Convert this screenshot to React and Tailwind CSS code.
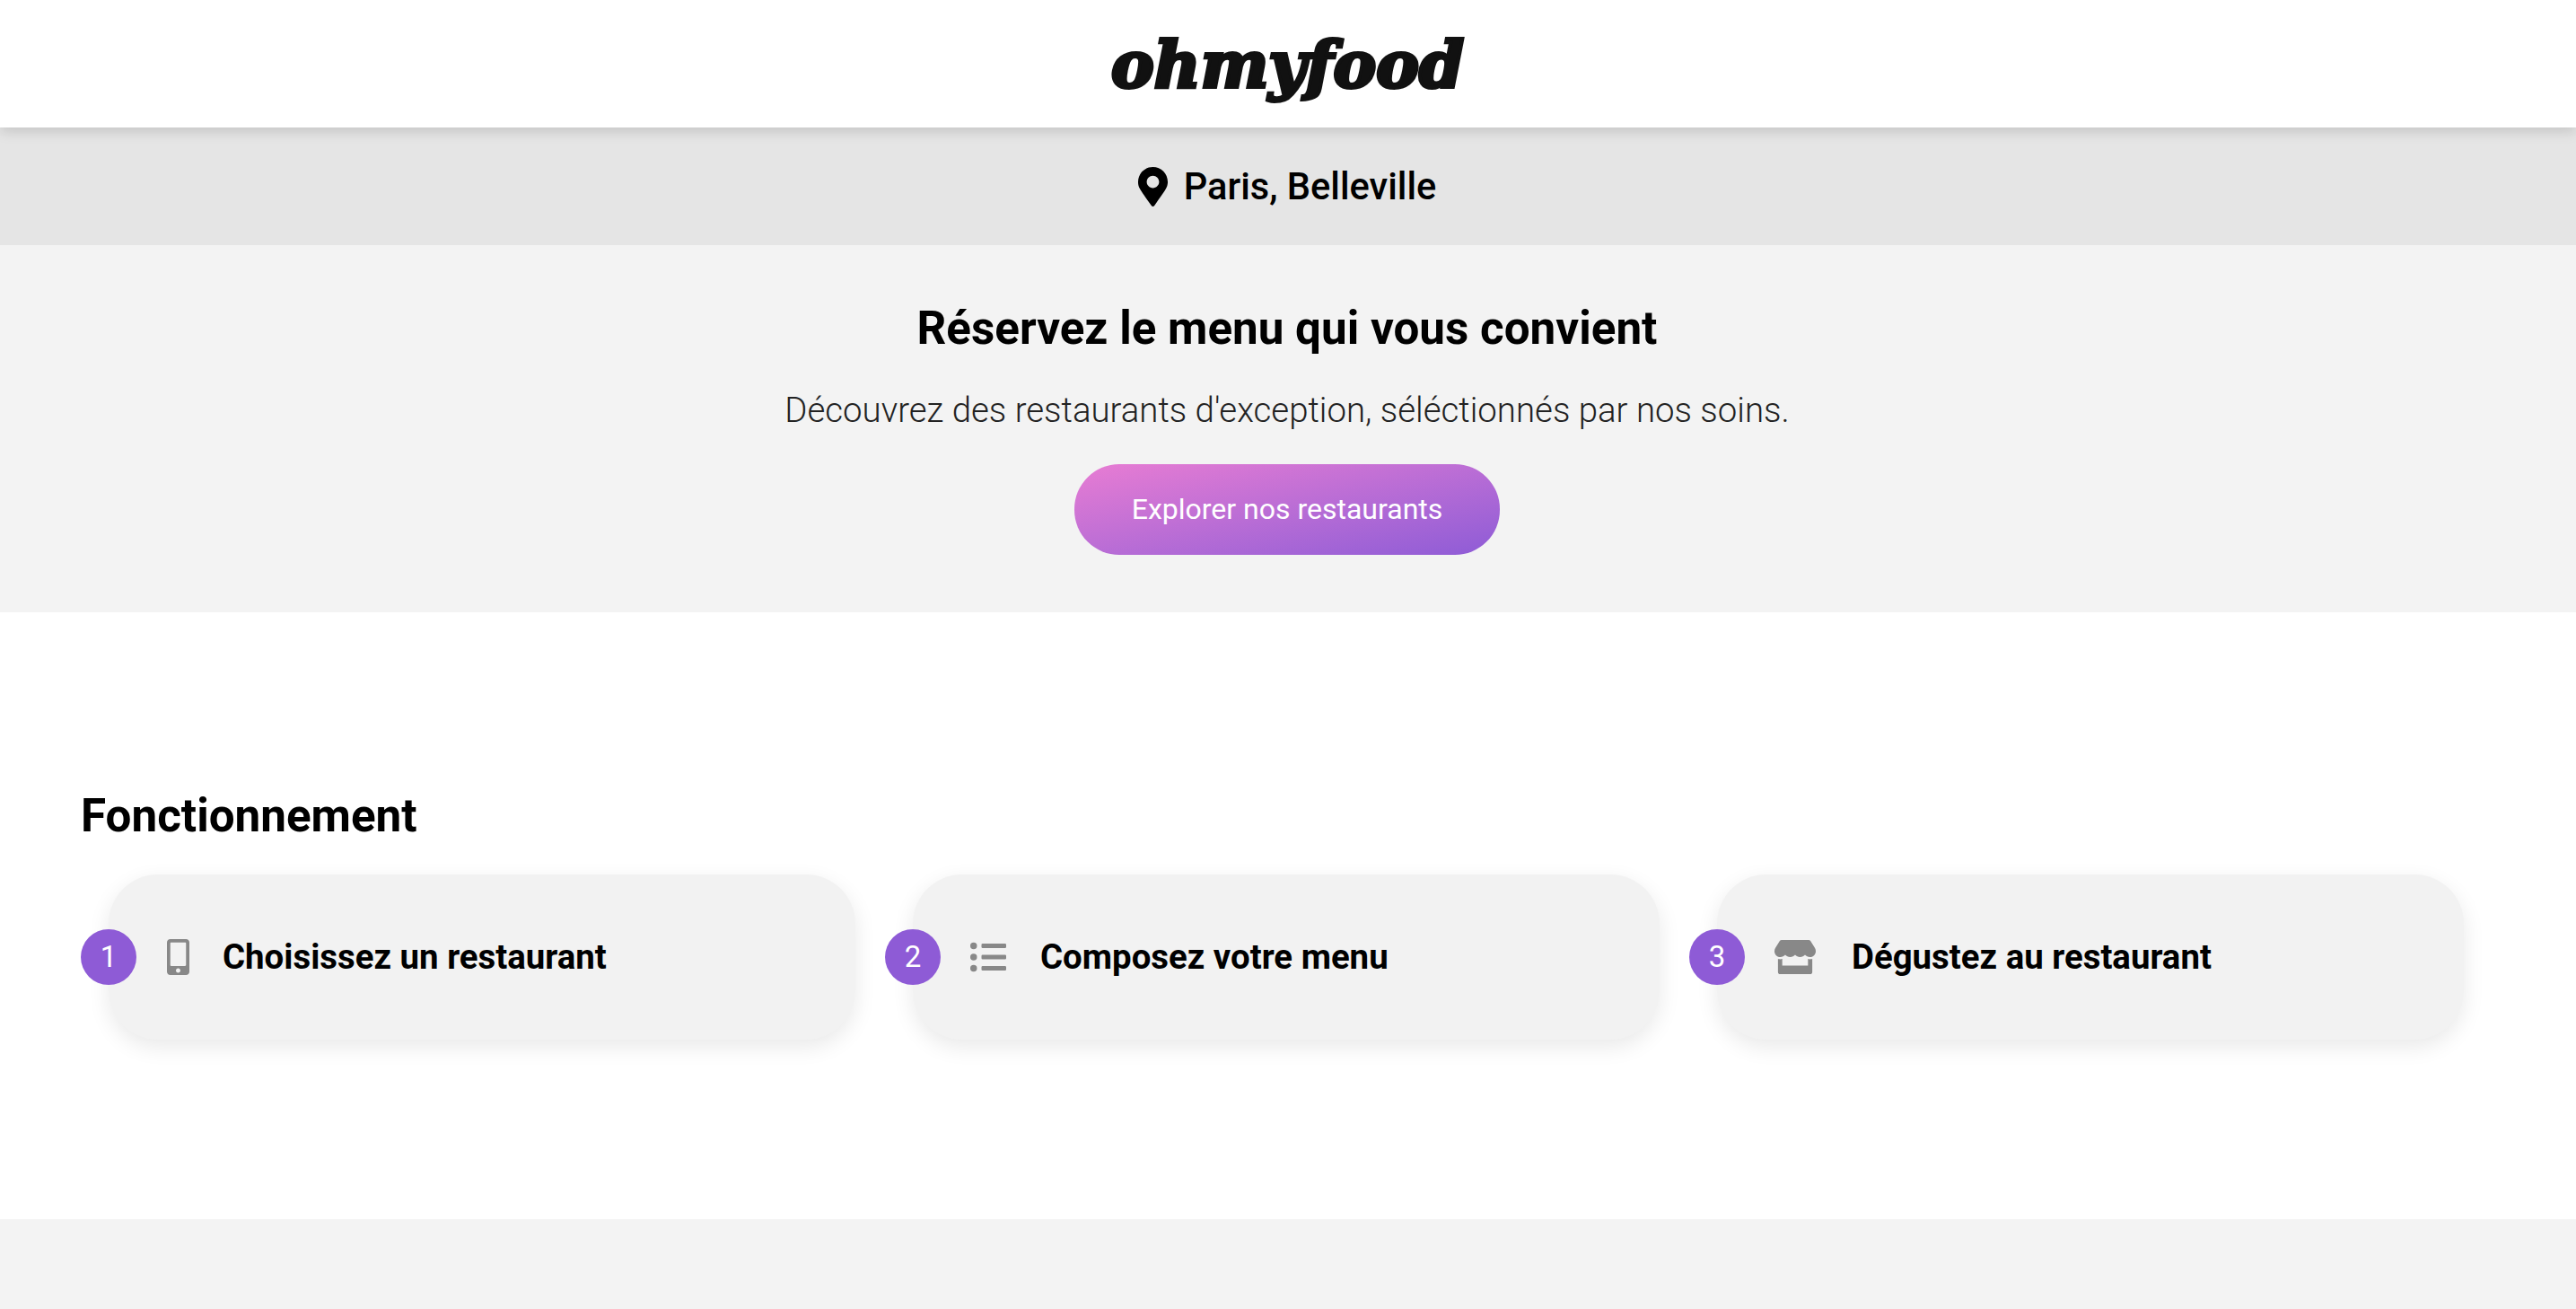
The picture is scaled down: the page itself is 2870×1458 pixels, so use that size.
import React from "react";
import { FaMapMarkerAlt, FaMobileAlt, FaListUl, FaStore } from "react-icons/fa";

const steps = [
  { n: 1, label: "Choisissez un restaurant", Icon: FaMobileAlt, icon: "w-[25px] h-[40px] mr-[37px]", pad: "pl-[65px]" },
  { n: 2, label: "Composez votre menu", Icon: FaListUl, icon: "w-[40px] h-[40px] mr-[38px]", pad: "pl-[64px]" },
  { n: 3, label: "Dégustez au restaurant", Icon: FaStore, icon: "w-[46px] h-[40px] mr-[40px]", pad: "pl-[64px]" },
];

export default function App() {
  return (
    <div className="min-h-[1458px] bg-white font-['Roboto',sans-serif] text-black overflow-hidden">
      <header className="relative z-10 h-[142px] pt-[3px] pr-[1px] bg-white shadow-[0_4px_14px_rgba(0,0,0,0.15)] flex items-center justify-center">
        <span className="font-['DejaVu_Serif',serif] italic font-bold text-[71.5px] leading-none text-[#111] [-webkit-text-stroke:4px_#111]">ohmyfood</span>
      </header>
      <div className="h-[131px] pr-[2px] pt-[1px] bg-[#e5e5e5] flex items-center justify-center gap-[18px]">
        <FaMapMarkerAlt className="w-[33px] h-[44px] text-black" />
        <span className="text-[41.6px] font-medium">Paris, Belleville</span>
      </div>
      <section className="h-[409px] pr-[2px] bg-[#f3f3f3] flex flex-col items-center pt-[58px]">
        <h1 className="text-[51.2px] font-bold leading-[70px]">Réservez le menu qui vous convient</h1>
        <p className="mt-[33px] text-[38.4px] font-light leading-[46px] text-[#222]">Découvrez des restaurants d'exception, séléctionnés par nos soins.</p>
        <button className="mt-[37px] w-[474px] h-[101px] pb-[2px] rounded-[50px] text-white text-[32px] bg-gradient-to-br from-[#e87cd3] to-[#8e5bd6]">Explorer nos restaurants</button>
      </section>
      <section className="h-[676px] bg-white pl-[90px] pt-[192px]">
        <h2 className="text-[51.2px] font-bold leading-[70px]">Fonctionnement</h2>
        <div className="mt-[30px] flex gap-[33px]">
          {steps.map(({ n, label, Icon, icon, pad }) => (
            <div key={n} className="relative w-[863px] h-[184px] pl-[31px]">
              <div className={"h-full rounded-[55px] bg-[#f2f2f2] shadow-[0_8px_24px_rgba(0,0,0,0.09)] flex items-center " + pad}>
                <Icon className={"text-[#888] shrink-0 " + icon} />
                <span className="text-[38.4px] font-bold">{label}</span>
              </div>
              <div className="absolute left-0 top-[61px] w-[62px] h-[62px] rounded-full bg-[#8e5bd6] text-white text-[33px] flex items-center justify-center">{n}</div>
            </div>
          ))}
        </div>
      </section>
      <footer className="h-[100px] bg-[#f3f3f3]" />
    </div>
  );
}
